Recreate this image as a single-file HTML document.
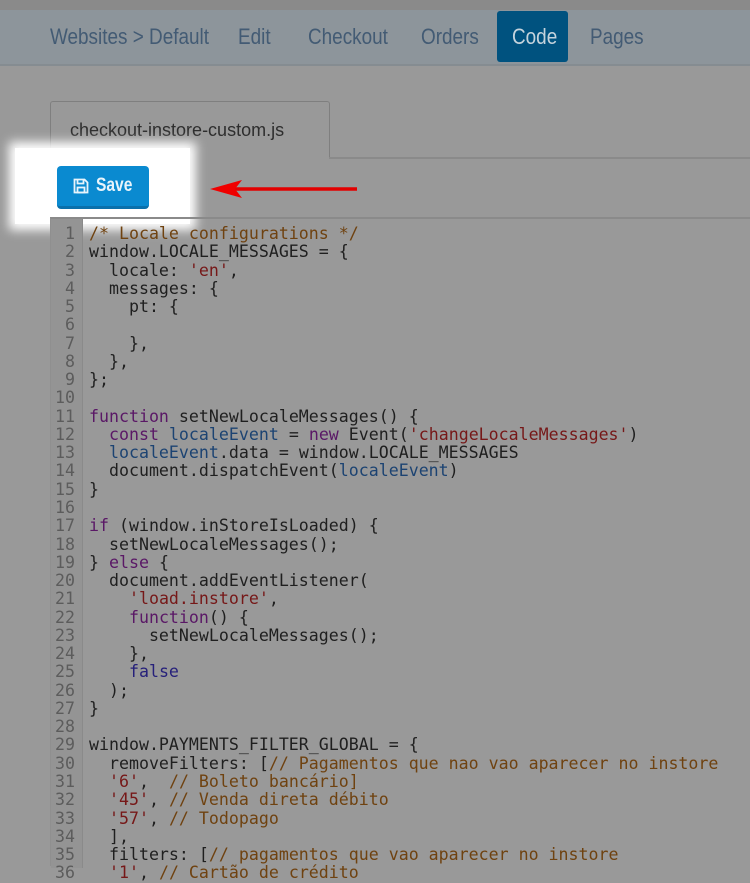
<!DOCTYPE html>
<html><head><meta charset="utf-8"><style>
*{margin:0;padding:0;box-sizing:border-box}
body{width:750px;height:866px;overflow:hidden;background:#999;position:relative;font-family:"Liberation Sans",sans-serif}
.top{position:absolute;left:0;top:0;width:750px;height:10px;background:#8a8a8a}
.nav{position:absolute;left:0;top:10px;width:750px;height:56px;background:#8d959b;border-bottom:2px solid #858c91}
.nav span{position:absolute;top:14px;font-size:22px;color:#435b74;transform:scaleX(.86);transform-origin:left}
.code{position:absolute;left:497px;top:1px;width:71px;height:51px;background:#00527f;border-radius:3px}
.tab{position:absolute;left:50px;top:101px;width:280px;height:58px;border:1px solid #7f7f7f;border-bottom:none;border-radius:3px 3px 0 0;background:#999}
.tab span{position:absolute;left:19px;top:18px;font-size:18px;color:#2e2e2e}
.line1{position:absolute;left:329px;top:157px;width:421px;height:2px;background:#8a8a8a}
.hl{position:absolute;left:15px;top:148px;width:175px;height:76px;background:#fff;box-shadow:0 0 10px 6px #fff}
.btn{position:absolute;left:57px;top:166px;width:92px;height:43px;background:#0a8ad0;border-radius:4px;border-bottom:3px solid #0a70ab;color:#e8f4fb;font-weight:bold;font-size:19px}
.btn span{position:absolute;left:39px;top:9px;transform:scaleX(.82);transform-origin:left}
.ed{position:absolute;left:50px;top:217px;width:700px;height:649px;border-top:2px solid #8a8a8a;border-left:1px solid #8f8f8f}
.gut{position:absolute;left:0;top:0;width:32px;height:649px;background:#949494;border-right:1px solid #8a8a8a}
pre{position:absolute;top:6px;font-family:"DejaVu Sans Mono",monospace;font-size:16.6px;line-height:18.27px;color:#1f1f1f}
.nums{left:0;width:24px;text-align:right;color:#5c5c5c}
.src{left:38px}
.c{color:#6f4210}.s{color:#761818}.k{color:#5a1866}.v{color:#1c4372}.b{color:#26207a}
</style></head><body>
<div class="top"></div>
<div class="nav">
<div class="code"></div>
<span style="left:50px">Websites &gt; Default</span>
<span style="left:238px">Edit</span>
<span style="left:308px">Checkout</span>
<span style="left:421px">Orders</span>
<span style="left:512px;color:#c5d3dc">Code</span>
<span style="left:590px">Pages</span>
</div>
<div class="tab"><span>checkout-instore-custom.js</span></div>
<div class="line1"></div>
<div class="hl"></div>
<div class="btn"><svg style="position:absolute;left:16px;top:12px" width="16" height="16" viewBox="0 0 16 16" fill="none" stroke="#e8f4fb" stroke-width="1.8"><path d="M1.5 1.5h10l3 3v10h-13z"/><path d="M4.5 1.5v4h6v-4"/><rect x="4.5" y="9.5" width="7" height="5"/></svg><span>Save</span></div>
<svg style="position:absolute;left:205px;top:178px" width="160" height="22"><line x1="25" y1="11" x2="152" y2="11" stroke="#e30000" stroke-width="3.5"/><polygon points="5,11 37,2 30,11 37,20" fill="#f00000"/></svg>
<div class="ed">
<div class="gut"></div>
<pre class="nums">1
2
3
4
5
6
7
8
9
10
11
12
13
14
15
16
17
18
19
20
21
22
23
24
25
26
27
28
29
30
31
32
33
34
35
36</pre>
<pre class="src"><span class="c">/* Locale configurations */</span>
window.LOCALE_MESSAGES = {
  locale: <span class="s">'en'</span>,
  messages: {
    pt: {

    },
  },
};

<span class="k">function</span> setNewLocaleMessages() {
  <span class="k">const</span> <span class="v">localeEvent</span> = <span class="k">new</span> Event(<span class="s">'changeLocaleMessages'</span>)
  <span class="v">localeEvent</span>.data = window.LOCALE_MESSAGES
  document.dispatchEvent(<span class="v">localeEvent</span>)
}

<span class="k">if</span> (window.inStoreIsLoaded) {
  setNewLocaleMessages();
} <span class="k">else</span> {
  document.addEventListener(
    <span class="s">'load.instore'</span>,
    <span class="k">function</span>() {
      setNewLocaleMessages();
    },
    <span class="b">false</span>
  );
}

window.PAYMENTS_FILTER_GLOBAL = {
  removeFilters: [<span class="c">// Pagamentos que nao vao aparecer no instore</span>
  <span class="s">'6'</span>,  <span class="c">// Boleto bancário]</span>
  <span class="s">'45'</span>, <span class="c">// Venda direta débito</span>
  <span class="s">'57'</span>, <span class="c">// Todopago</span>
  ],
  filters: [<span class="c">// pagamentos que vao aparecer no instore</span>
  <span class="s">'1'</span>, <span class="c">// Cartão de crédito</span></pre>
</div>
</body></html>
